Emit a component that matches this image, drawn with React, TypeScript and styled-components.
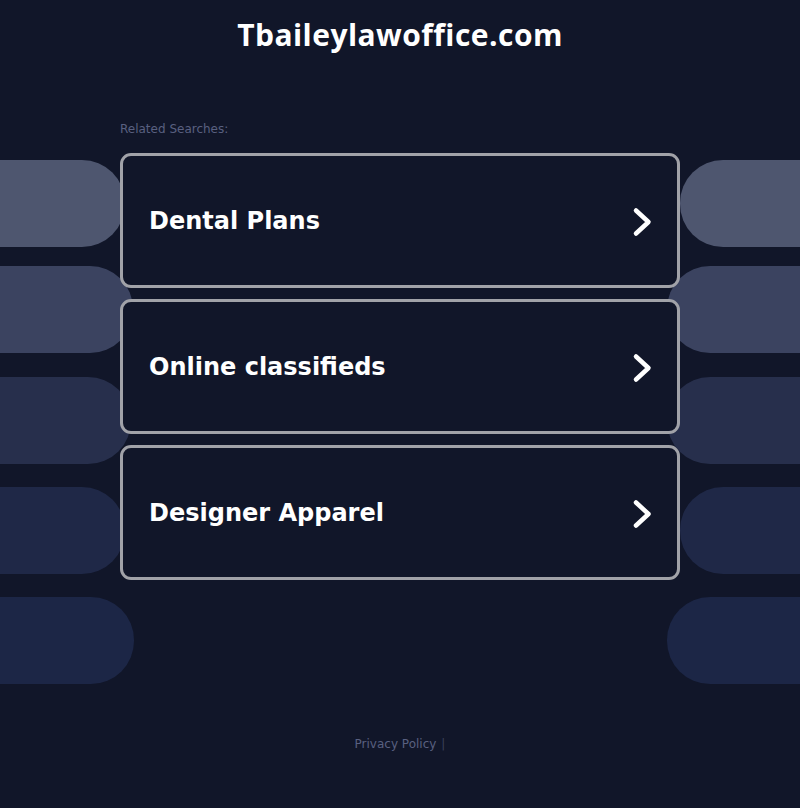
import React from 'react';
import styled, { createGlobalStyle } from 'styled-components';

const GlobalStyle = createGlobalStyle`
  html, body {
    margin: 0;
    padding: 0;
    background: #111629;
  }
  body {
    font-family: "DejaVu Sans", sans-serif;
  }
`;

const searches = ['Dental Plans', 'Online classifieds', 'Designer Apparel'];

// decorative pills at the sides: offset from the previous pill, width, colour
const leftPills = [
  { gap: 0, width: 125, color: '#4e566f' },
  { gap: 19, width: 133, color: '#3b4360' },
  { gap: 24, width: 131, color: '#272f4c' },
  { gap: 23, width: 125, color: '#1f2847' },
  { gap: 23, width: 134, color: '#1c2646' },
];

const rightPills = [
  { gap: 0, width: 120, color: '#4e566f' },
  { gap: 19, width: 133, color: '#3b4360' },
  { gap: 24, width: 133, color: '#272f4c' },
  { gap: 23, width: 120, color: '#1f2847' },
  { gap: 23, width: 133, color: '#1c2646' },
];

const Chevron = () => (
  <svg width="24" height="32" viewBox="0 0 24 32" fill="none">
    <path
      d="M5 5.5 L17.5 17 L5 28.5"
      stroke="#ffffff"
      strokeWidth="4.5"
      strokeLinecap="round"
      strokeLinejoin="round"
    />
  </svg>
);

export default function App() {
  return (
    <Page>
      <GlobalStyle />
      <Backdrop>
        <PillColumn $side="left">
          {leftPills.map((p, i) => (
            <Pill key={i} $side="left" $gap={p.gap} $width={p.width} $color={p.color} />
          ))}
        </PillColumn>
        <PillColumn $side="right">
          {rightPills.map((p, i) => (
            <Pill key={i} $side="right" $gap={p.gap} $width={p.width} $color={p.color} />
          ))}
        </PillColumn>
      </Backdrop>
      <Title>Tbaileylawoffice.com</Title>
      <Content>
        <Label>Related Searches:</Label>
        <CardList>
          {searches.map((s) => (
            <Card key={s} href="#">
              <CardText>{s}</CardText>
              <Chevron />
            </Card>
          ))}
        </CardList>
      </Content>
      <Footer>
        <FooterLink href="#">Privacy Policy</FooterLink>
        <Sep>|</Sep>
      </Footer>
    </Page>
  );
}

const Page = styled.div`
  position: relative;
  min-height: 808px;
  overflow: hidden;
  display: flex;
  flex-direction: column;
  align-items: center;
`;

const Backdrop = styled.div`
  position: absolute;
  inset: 0;
  z-index: 0;
  pointer-events: none;
`;

const PillColumn = styled.div<{ $side: 'left' | 'right' }>`
  position: absolute;
  top: 160px;
  ${(p) => (p.$side === 'left' ? 'left: 0;' : 'right: 0;')}
  display: flex;
  flex-direction: column;
  align-items: ${(p) => (p.$side === 'left' ? 'flex-start' : 'flex-end')};
`;

const Pill = styled.div<{ $side: 'left' | 'right'; $gap: number; $width: number; $color: string }>`
  margin-top: ${(p) => p.$gap}px;
  width: ${(p) => p.$width}px;
  height: 87px;
  background: ${(p) => p.$color};
  border-radius: ${(p) => (p.$side === 'left' ? '0 43px 43px 0' : '43px 0 0 43px')};
`;

const Title = styled.h1`
  position: relative;
  z-index: 1;
  margin: 16px 0 0;
  font-family: "Open Sans", sans-serif;
  font-weight: 700;
  font-size: 30px;
  line-height: 38px;
  color: #ffffff;
  letter-spacing: 0.45px;
`;

const Content = styled.div`
  position: relative;
  z-index: 1;
  width: 560px;
  margin-top: 68px;
  display: flex;
  flex-direction: column;
`;

const Label = styled.div`
  font-family: "DejaVu Sans", sans-serif;
  font-size: 12px;
  line-height: 14px;
  color: #596080;
  margin-bottom: 17px;
`;

const CardList = styled.div`
  display: flex;
  flex-direction: column;
  gap: 11px;
`;

const Card = styled.a`
  box-sizing: border-box;
  height: 135px;
  display: flex;
  align-items: center;
  justify-content: space-between;
  padding: 0 22px 0 26px;
  border: 3px solid #a1a2a8;
  border-radius: 11px;
  background: #111629;
  text-decoration: none;
`;

const CardText = styled.span`
  font-family: "DejaVu Sans", sans-serif;
  font-weight: 700;
  font-size: 24px;
  color: #ffffff;
`;

const Footer = styled.div`
  position: relative;
  z-index: 1;
  margin-top: 156px;
  display: flex;
  gap: 5px;
  font-family: "DejaVu Sans", sans-serif;
  font-size: 12px;
  line-height: 16px;
`;

const FooterLink = styled.a`
  color: #596080;
  text-decoration: none;
`;

const Sep = styled.span`
  color: #3a405a;
`;
